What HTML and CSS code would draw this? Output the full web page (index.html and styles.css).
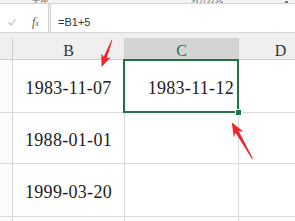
FILE: index.html
```html
<!DOCTYPE html>
<html lang="zh-CN">
<head>
<meta charset="utf-8">
<title>Sheet</title>
<link rel="stylesheet" href="styles.css">
</head>
<body>
<div class="app">
  <div class="ribbon-edge">
    <span class="rb-label rb-font">字体</span>
    <span class="rb-label rb-align">对齐方式</span>
    <span class="rb-launch"></span>
  </div>
  <div class="formula-bar">
    <div class="fx-panel">
      <svg class="check" width="8" height="7" viewBox="0 0 8 7"><polyline points="0.5,3.5 3,6 7.5,0.5" fill="none" stroke="#bcbcbc" stroke-width="1.1"/></svg>
      <span class="fx"><i>f</i><span class="fx-x">x</span></span>
    </div>
    <div class="formula-input">=B1+5</div>
  </div>
  <div class="band"></div>
  <div class="sheet">
    <div class="corner"></div>
    <div class="col-h">B</div>
    <div class="col-h col-h--active">C</div>
    <div class="col-h">D</div>

    <div class="row-h"></div>
    <div class="cell cell--center">1983-11-07</div>
    <div class="cell cell--right">1983-11-12<div class="sel"><span class="handle"></span></div></div>
    <div class="cell"></div>

    <div class="row-h"></div>
    <div class="cell cell--center">1988-01-01</div>
    <div class="cell"></div>
    <div class="cell"></div>

    <div class="row-h"></div>
    <div class="cell cell--center">1999-03-20</div>
    <div class="cell"></div>
    <div class="cell"></div>

    <div class="row-h"></div>
    <div class="cell"></div>
    <div class="cell"></div>
    <div class="cell"></div>
  </div>
  <svg class="annotations" width="295" height="221" viewBox="0 0 295 221">
    <g transform="translate(101.5 67) rotate(111.25)">
      <polygon points="-29,-0.4 -10,-1.6 -12.5,-5 0,0 -12.5,5 -10,1.6 -29,0.4" fill="#e8262b"/>
    </g>
    <g transform="translate(231.7 122.3) rotate(-119.55)">
      <polygon points="-42,-0.5 -11,-1.8 -14,-5.5 0,0 -14,5.5 -11,1.8 -42,0.5" fill="#e8262b"/>
    </g>
  </svg>
</div>
</body>
</html>
```
FILE: styles.css
```css
body {
  margin: 0;
  background: #ffffff;
  font-family: "Liberation Sans", Arial, sans-serif;
}

.app {
  position: relative;
  width: 295px;
  height: 221px;
  overflow: hidden;
  background: #ffffff;
}

.ribbon-edge {
  height: 3px;
  border-bottom: 1px solid #d6d6d6;
  background: #f3f3f3;
  display: flex;
  align-items: flex-end;
  overflow: hidden;
  font-family: "Noto Sans CJK SC", sans-serif;
  font-size: 8px;
  line-height: 8px;
  color: #666666;
}

.rb-font {
  margin-left: 32px;
}

.rb-align {
  margin-left: 143px;
}

.rb-launch {
  margin-left: 62px;
  width: 3px;
  height: 2px;
  background: #7a7a7a;
}

.formula-bar {
  display: flex;
  gap: 1px;
  height: 29px;
  box-sizing: border-box;
  border-bottom: 1px solid #d6d6d6;
  background: #f0f0f0;
}

.fx-panel {
  width: 49px;
  box-sizing: border-box;
  border-right: 1px solid #d2d2d2;
  background: #ffffff;
  display: flex;
  align-items: center;
  padding: 8px 0 0 8px;
}

.check {
  display: block;
}

.fx {
  margin-left: 16px;
  font-family: "Liberation Serif", serif;
  font-size: 12px;
  color: #555555;
}

.fx-x {
  font-style: italic;
  font-size: 8px;
}

.formula-input {
  flex: 1;
  border-left: 1px solid #d2d2d2;
  background: #ffffff;
  display: flex;
  align-items: center;
  padding: 8px 0 0 7px;
  font-size: 11px;
  color: #333333;
}

.band {
  height: 5px;
  background: #f0f0f0;
}

.sheet {
  display: grid;
  grid-template-columns: 13px 112px 114px 84px;
  grid-template-rows: 22px 53px 51px 53px 30px;
}

.sheet > div {
  box-sizing: border-box;
}

.corner,
.col-h {
  background: #efefef;
  border-right: 1px solid #cfcfcf;
  border-bottom: 1px solid #cfcfcf;
}

.col-h {
  display: flex;
  justify-content: center;
  align-items: center;
  padding-top: 5px;
  font-family: "Liberation Serif", serif;
  font-size: 16px;
  color: #333333;
}

.col-h--active {
  background: #d4d4d4;
  color: #217346;
}

.row-h {
  background: #fbfbfb;
  border-right: 1px solid #d4d4d4;
  border-bottom: 1px solid #dadada;
}

.cell {
  border-right: 1px solid #dadada;
  border-bottom: 1px solid #dadada;
  display: flex;
  align-items: center;
  padding-top: 4px;
  font-family: "Liberation Serif", serif;
  font-size: 18px;
  letter-spacing: 0.3px;
  color: #1c1c1c;
}

.cell--center {
  justify-content: center;
}

.cell--right {
  position: relative;
  justify-content: flex-end;
  padding-right: 4px;
}

.sel {
  position: absolute;
  left: -2px;
  top: -1px;
  right: -1px;
  bottom: -1px;
  border: 2px solid #217346;
}

.handle {
  position: absolute;
  right: -4px;
  bottom: -4px;
  width: 5px;
  height: 5px;
  background: #217346;
  box-shadow: 0 0 0 1px #ffffff;
}

.annotations {
  position: absolute;
  left: 0;
  top: 0;
  pointer-events: none;
}
```
